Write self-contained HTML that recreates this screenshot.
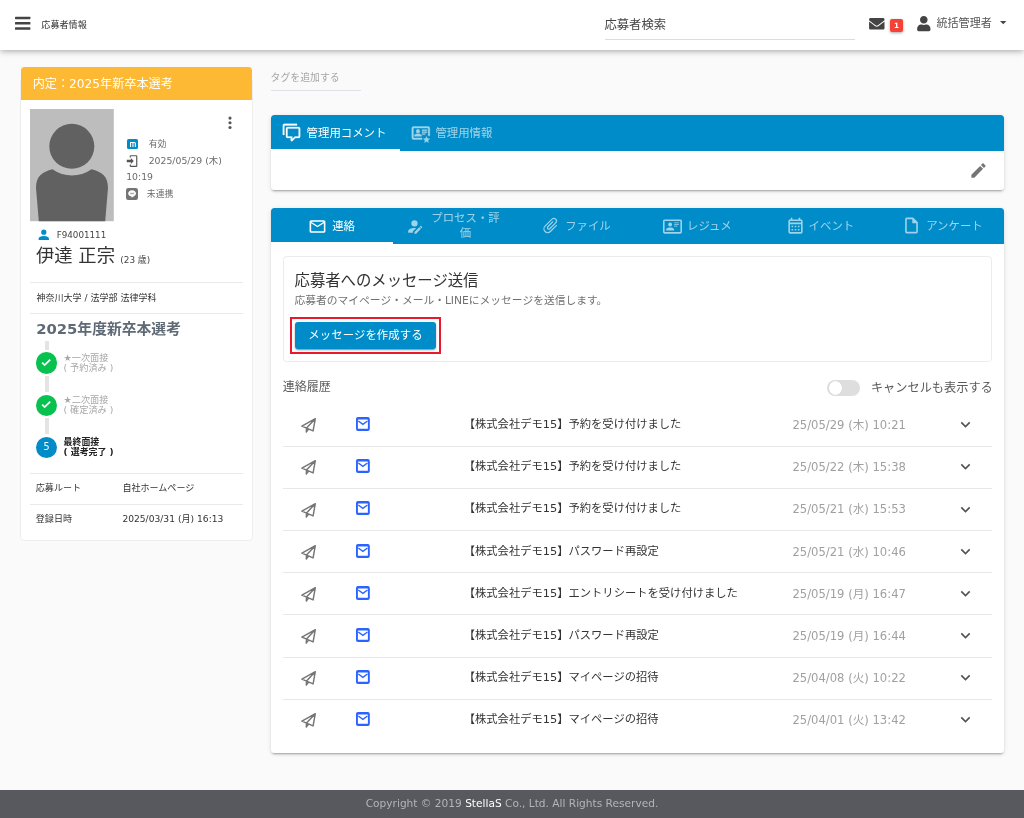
<!DOCTYPE html>
<html lang="ja">
<head>
<meta charset="utf-8">
<title>応募者情報</title>
<style>
*{box-sizing:border-box;margin:0;padding:0}
html,body{width:1024px;height:818px;overflow:hidden}
body{background:#fafafa;color:#333;font-family:"DejaVu Sans","Liberation Sans","Noto Sans CJK JP",sans-serif;font-size:11.4px;position:relative}
#wrap{position:absolute;left:0;top:0;width:1024px;height:818px;will-change:transform}
.abs{position:absolute;white-space:nowrap}
svg{position:absolute;display:block;overflow:visible}
/* header */
#hdr{position:absolute;left:0;top:0;width:1024px;height:49.5px;background:#fff;box-shadow:0 2px 4px -1px rgba(0,0,0,.16),0 4px 5px 0 rgba(0,0,0,.09),0 1px 10px 0 rgba(0,0,0,.07)}
.bar{position:absolute;left:15px;width:15.3px;height:2.3px;background:#444;border-radius:.6px}
/* left card */
#lc{position:absolute;left:20px;top:80px;width:233px;height:461px;background:#fff;border:1px solid #ededed;border-radius:0 0 4px 4px}
#lch{position:absolute;left:21px;top:67px;width:231px;height:33px;background:#fdb933;border-radius:3.5px 3.5px 0 0}
.hr{position:absolute;left:30px;width:213.4px;height:1px;background:#e9e9e9}
.g{color:#6b6b6b}
.step{position:absolute;left:63.5px;font-size:9.2px;line-height:10.3px;color:#a8a8a8;white-space:nowrap}
.circ{position:absolute;left:35.6px;width:21.8px;height:21.8px;border-radius:50%}
.vl{position:absolute;left:45.2px;width:3.6px;background:#e4e4e4}
.lab{position:absolute;font-size:9.05px;line-height:12px;color:#333;white-space:nowrap}
.card{position:absolute;left:270.8px;width:733.4px;background:#fff;border-radius:3.5px;box-shadow:0 3px 1px -2px rgba(0,0,0,.16),0 2px 2px 0 rgba(0,0,0,.11),0 1px 5px 0 rgba(0,0,0,.11)}
.bluebar{position:absolute;left:0;top:0;width:100%;background:#008cc8;border-radius:3.5px 3.5px 0 0}
.tabt{font-size:11.4px;line-height:18px;color:rgba(255,255,255,.62)}
.dim{opacity:.62}
.row{position:absolute;left:283.4px;width:708.8px;height:42.17px}
.row .ln{position:absolute;left:0;bottom:-.5px;width:100%;height:1px;background:#e8e8e8}
/* footer */
#ft{position:absolute;left:0;top:790.3px;width:1024px;height:28px;background:#58595e;color:#b4b4b7;font-size:10.6px;line-height:27.6px;text-align:center;white-space:nowrap}
#ft b{color:#fff;font-weight:normal}
</style>
</head>
<body>
<div id="wrap">

<!-- ================= HEADER ================= -->
<div id="hdr">
  <svg style="left:15px;top:16px" width="15.4" height="14.2" viewBox="0 0 15.4 14.2"><rect x="0" y=".65" width="15.4" height="2.5" rx=".6" fill="#444"/><rect x="0" y="6" width="15.4" height="2.5" rx=".6" fill="#444"/><rect x="0" y="11.35" width="15.4" height="2.5" rx=".6" fill="#444"/></svg>
  <div class="abs" style="left:41.3px;top:17.5px;font-size:9.1px;line-height:14px;color:#333">応募者情報</div>
  <div class="abs" style="left:604.5px;top:16px;font-size:12.3px;line-height:18px;color:#444">応募者検索</div>
  <div style="position:absolute;left:604.8px;top:38.6px;width:250.4px;height:1px;background:#dcdcdc"></div>
  <!-- envelope -->
  <svg style="left:868.8px;top:17.6px" width="15.6" height="11.6" viewBox="0 0 512 384"><path fill="#444" d="M502 126c4-3 10 0 10 5v205c0 26-22 48-48 48H48c-26 0-48-22-48-48V131c0-5 6-8 10-5 22 17 52 39 154 113 21 15 57 48 92 48 36 0 72-33 93-48 102-74 131-96 153-113zM256 256c23 0 57-29 73-41 133-96 143-105 174-129 6-5 9-12 9-19V48c0-26-22-48-48-48H48C22 0 0 22 0 48v19c0 7 3 14 9 19 31 24 41 33 174 129 16 12 50 41 73 41z"/></svg>
  <!-- badge -->
  <div style="position:absolute;left:890.3px;top:19.3px;width:12.6px;height:12.6px;background:#f44336;border-radius:2px;box-shadow:0 1px 3px rgba(0,0,0,.35);color:#fff;font-size:7.2px;font-weight:bold;line-height:13.4px;text-align:center">1</div>
  <!-- user -->
  <svg style="left:916.6px;top:15.8px" width="13.6" height="15.2" viewBox="0 0 448 512"><path fill="#444" d="M224 256c71 0 128-57 128-128S295 0 224 0 96 57 96 128s57 128 128 128zm90 32h-17c-22 10-47 16-73 16s-51-6-73-16h-17C60 288 0 348 0 422v42c0 27 21 48 48 48h352c27 0 48-21 48-48v-42c0-74-60-134-134-134z"/></svg>
  <div class="abs" style="left:936.4px;top:15px;font-size:11.1px;line-height:18px;color:#555">統括管理者</div>
  <svg style="left:999.8px;top:20.8px" width="6.4" height="3.2" viewBox="0 0 10 5"><path fill="#444" d="M0 0h10L5 5z"/></svg>
</div>

<!-- ================= LEFT CARD ================= -->
<div id="lc"></div>
<div id="lch"></div>
<div class="abs" style="left:32.7px;top:74.9px;font-size:12.15px;line-height:19px;color:#fff">内定：2025年新卒本選考</div>

<!-- avatar -->
<svg style="left:30px;top:108.6px" width="83.8" height="112.2" viewBox="0 0 83.8 112.2">
  <rect width="83.8" height="112.2" fill="#bdbdbd"/>
  <circle cx="41.8" cy="37.3" r="22.5" fill="#616161"/>
  <path fill="#616161" d="M8.8,112.2 L6,79 C6,67 12,63 22.5,60.2 C34,68.5 50,68.5 61.5,60.2 C72,63 78,67 78,79 L75.2,112.2 Z"/>
</svg>
<!-- kebab -->
<svg style="left:227.5px;top:115.6px" width="4" height="14" viewBox="0 0 4 14"><circle cx="2" cy="2.1" r="1.55" fill="#555"/><circle cx="2" cy="6.8" r="1.55" fill="#555"/><circle cx="2" cy="11.5" r="1.55" fill="#555"/></svg>

<!-- status lines -->
<div style="position:absolute;left:127.3px;top:138.9px;width:10.6px;height:10.6px;background:#008cc8;border-radius:1.6px"></div>
<svg style="left:129.7px;top:141.9px" width="5.9" height="5" viewBox="0 0 6.4 5.4"><path fill="none" stroke="#fff" stroke-width="1.15" d="M.6,5.4V.6H4.7A1.1,1.1 0 0 1 5.8,1.7V5.4M3.2,.6V5.4"/></svg>
<div class="abs g" style="left:148.7px;top:136px;font-size:8.87px;line-height:16px">有効</div>
<svg style="left:125.4px;top:154px" width="14.1" height="14.1" viewBox="0 0 24 24"><path fill="#555" d="M10,17V14H3V10H10V7L15,12L10,17M10,2H19A2,2 0 0,1 21,4V20A2,2 0 0,1 19,22H10A2,2 0 0,1 8,20V18H10V20H19V4H10V6H8V4A2,2 0 0,1 10,2Z"/></svg>
<div class="abs g" style="left:148.7px;top:153px;font-size:9.3px;line-height:16px">2025/05/29 (木)</div>
<div class="abs g" style="left:126.2px;top:169.4px;font-size:9.3px;line-height:16px">10:19</div>
<div style="position:absolute;left:126px;top:188.1px;width:12px;height:12.1px;background:#757575;border-radius:2.2px"></div>
<svg style="left:127.9px;top:190.4px" width="8.2" height="8" viewBox="0 0 8.2 8"><path fill="#fff" d="M4.1,.3C1.9,.3 .2,1.7 .2,3.4C.2,4.9 1.5,6.1 3.4,6.4C3.7,6.5 3.6,6.8 3.5,7.4C3.5,7.6 3.7,7.7 4,7.5C4.4,7.300 6.700,6 7.500,4.800C7.900,4.300 8,3.900 8,3.400C8,1.700 6.300,.3 4.100,.3Z"/><rect x="2" y="2.7" width="4.2" height="1.5" rx=".4" fill="#757575" opacity=".55"/></svg>
<div class="abs g" style="left:146.8px;top:186.4px;font-size:8.87px;line-height:16px">未連携</div>

<!-- id + name -->
<svg style="left:35.8px;top:226.9px" width="15.6" height="15.6" viewBox="0 0 24 24"><path fill="#008cc8" d="M12,4A4,4 0 0,1 16,8A4,4 0 0,1 12,12A4,4 0 0,1 8,8A4,4 0 0,1 12,4M12,14C16.42,14 20,15.790 20,18V20H4V18C4,15.790 7.580,14 12,14Z"/></svg>
<div class="abs" style="left:56.7px;top:226.5px;font-size:8.75px;line-height:16px;color:#444">F94001111</div>
<div class="abs" style="left:36px;top:243px;font-size:18.3px;line-height:26px;color:#333">伊達 正宗</div>
<div class="abs" style="left:120.3px;top:252px;font-size:8.87px;line-height:16px;color:#444">(23 歳)</div>

<div class="hr" style="top:281.8px"></div>
<div class="lab" style="left:36.4px;top:292px">神奈川大学 / 法学部 法律学科</div>
<div class="hr" style="top:313px"></div>
<div class="abs" style="left:36.2px;top:316.5px;font-size:14.8px;line-height:24px;font-weight:bold;color:#5f6a76">2025年度新卒本選考</div>

<!-- timeline -->
<div class="vl" style="top:341px;height:9px"></div>
<div class="vl" style="top:376.3px;height:15.4px"></div>
<div class="vl" style="top:418.4px;height:15.4px"></div>
<div class="circ" style="top:352.4px;background:#07c24e"></div>
<div class="circ" style="top:394.5px;background:#07c24e"></div>
<div class="circ" style="top:436.6px;background:#008cc8"></div>
<svg style="left:40.3px;top:355.9px" width="12.4" height="12.4" viewBox="0 0 24 24"><path fill="none" stroke="#fff" stroke-width="3.4" d="M4.2,12.8L9,17.6L19.8,6.8"/></svg>
<svg style="left:40.3px;top:398px" width="12.4" height="12.4" viewBox="0 0 24 24"><path fill="none" stroke="#fff" stroke-width="3.4" d="M4.2,12.8L9,17.6L19.8,6.8"/></svg>
<div class="abs" style="left:35.6px;top:439px;width:21.8px;text-align:center;font-size:9.6px;line-height:16px;color:#fff">5</div>
<div class="step" style="top:352.6px">★一次面接<br>( 予約済み )</div>
<div class="step" style="top:394.7px">★二次面接<br>( 確定済み )</div>
<div class="step" style="top:436.9px;color:#222;font-weight:bold;font-size:8.95px">最終面接<br>( 選考完了 )</div>

<div class="hr" style="top:472.9px"></div>
<div class="lab" style="left:35.8px;top:481.8px">応募ルート</div>
<div class="lab" style="left:122.4px;top:481.8px">自社ホームページ</div>
<div class="hr" style="top:503.9px"></div>
<div class="lab" style="left:35.8px;top:512.8px">登録日時</div>
<div class="lab" style="left:122.4px;top:512.8px;font-size:9.15px">2025/03/31 (月) 16:13</div>

<!-- ================= TAG INPUT ================= -->
<div class="abs" style="left:270.5px;top:69.6px;font-size:9.9px;line-height:16px;color:#a6a6a6">タグを追加する</div>
<div style="position:absolute;left:271px;top:90px;width:90px;height:1px;background:#dfe1ea"></div>

<!-- ================= COMMENT CARD ================= -->
<div class="card" style="top:114.6px;height:75.5px">
  <div class="bluebar" style="height:36.2px"></div>
  <div style="position:absolute;left:0;top:34.3px;width:128.8px;height:1.9px;background:#fff"></div>
</div>
<svg style="left:282.4px;top:123.4px" width="19" height="19" viewBox="0 0 24 24"><path fill="#fff" stroke="#fff" stroke-width=".3" d="M12,23A1,1 0 0,1 11,22V19H7A2,2 0 0,1 5,17V7A2,2 0 0,1 7,5H21A2,2 0 0,1 23,7V17A2,2 0 0,1 21,19H16.9L13.2,22.710C13,22.890 12.760,23 12.500,23H12M13,17V20.080L16.080,17H21V7H7V17H13M3,15H1V3A2,2 0 0,1 3,1H19V3H3V15Z"/></svg>
<div class="abs" style="left:306.6px;top:124px;font-size:11.4px;line-height:18px;color:#fff">管理用コメント</div>
<svg style="left:410.6px;top:123.6px" width="19.6" height="19.6" viewBox="0 0 24 24" opacity=".62"><path fill="#fff" stroke="#fff" stroke-width=".45" d="M3,3H21A2,2 0 0,1 23,5V14.500H21V5H3V17H13.500V19H3A2,2 0 0,1 1,17V5A2,2 0 0,1 3,3M13,14.200V15H4V14.200C4,12.700 7,12 8.500,12C10,12 13,12.700 13,14.200M8.500,6.500A2.250,2.250 0 0,1 10.750,8.750A2.250,2.250 0 0,1 8.500,11A2.250,2.250 0 0,1 6.250,8.750A2.250,2.250 0 0,1 8.500,6.500M13.500,7H19.500V8.200H13.500V7M13.500,9.400H19.500V10.600H13.500V9.400M13.500,11.800H17.500V13H13.500V11.800M19,15.300L20.120,17.900L22.900,18.150L20.780,19.990L21.420,22.700L19,21.260L16.580,22.700L17.220,19.990L15.100,18.150L17.880,17.900L19,15.300Z"/></svg>
<div class="abs" style="left:435.4px;top:124px;font-size:11.4px;line-height:18px;color:rgba(255,255,255,.62)">管理用情報</div>
<svg style="left:968.7px;top:160.9px" width="19" height="19" viewBox="0 0 24 24"><path fill="#757575" d="M20.710,7.040C21.100,6.650 21.100,6 20.710,5.630L18.370,3.290C18,2.900 17.350,2.900 16.960,3.290L15.120,5.120L18.870,8.870M3,17.250V21H6.750L17.810,9.930L14.060,6.180L3,17.250Z"/></svg>

<!-- ================= MAIN CARD ================= -->
<div class="card" style="top:208.1px;height:544.6px">
  <div class="bluebar" style="height:36px"></div>
  <div style="position:absolute;left:0;top:34.2px;width:122px;height:1.8px;background:#fff"></div>
  <div style="position:absolute;left:12.6px;top:48.2px;width:708.8px;height:105.4px;border:1px solid #ececec;border-radius:3.5px"></div>
</div>

<!-- tabs -->
<svg style="left:308.1px;top:216.7px" width="19" height="19" viewBox="0 0 24 24"><path fill="#fff" d="M22,6C22,4.900 21.100,4 20,4H4C2.900,4 2,4.900 2,6V18C2,19.100 2.900,20 4,20H20C21.100,20 22,19.100 22,18V6M20,6L12,11L4,6H20M20,18H4V8L12,13L20,8V18Z"/></svg>
<div class="abs" style="left:332.2px;top:217px;font-size:11.4px;line-height:18px;color:#fff">連絡</div>

<svg class="dim" style="left:404.8px;top:217.1px" width="19" height="19" viewBox="0 0 24 24"><path fill="#fff" d="M21.700,13.350L20.700,14.350L18.650,12.300L19.650,11.300C19.860,11.090 20.210,11.090 20.420,11.300L21.700,12.580C21.910,12.790 21.910,13.140 21.700,13.350M12,18.940L18.060,12.880L20.110,14.930L14.060,21H12V18.940M12,14C7.580,14 4,15.790 4,18V20H10V18.110L14,14.110C13.340,14.030 12.670,14 12,14M12,4A4,4 0 0,0 8,8A4,4 0 0,0 12,12A4,4 0 0,0 16,8A4,4 0 0,0 12,4Z"/></svg>
<div class="abs tabt" style="left:431.3px;top:210.5px;width:68.4px;line-height:15.3px;text-align:center;white-space:normal">プロセス・評<br>価</div>

<svg class="dim" style="left:541.2px;top:216.4px" width="19" height="19" viewBox="0 0 24 24"><g transform="rotate(45 12 12)"><path fill="#fff" d="M16.500,6V17.500A4,4 0 0,1 12.500,21.500A4,4 0 0,1 8.500,17.500V5A2.500,2.500 0 0,1 11,2.500A2.500,2.500 0 0,1 13.500,5V15.500A1,1 0 0,1 12.500,16.500A1,1 0 0,1 11.500,15.500V6H10V15.500A2.500,2.500 0 0,0 12.500,18A2.500,2.500 0 0,0 15,15.500V5A4,4 0 0,0 11,1A4,4 0 0,0 7,5V17.500A5.500,5.500 0 0,0 12.500,23A5.500,5.500 0 0,0 18,17.500V6H16.500Z"/></g></svg>
<div class="abs tabt" style="left:565.2px;top:217px">ファイル</div>

<svg class="dim" style="left:663.3px;top:216.5px" width="19" height="19" viewBox="0 0 24 24"><path fill="#fff" d="M22,3H2C.910,3.040 .040,3.910 0,5V19C.040,20.090 .910,20.960 2,21H22C23.090,20.960 23.960,20.090 24,19V5C23.960,3.910 23.090,3.040 22,3M22,19H2V5H22V19M14,17V15.750C14,14.090 10.660,13.250 9,13.250C7.340,13.250 4,14.090 4,15.750V17H14M9,7A2.500,2.500 0 0,0 6.500,9.500A2.500,2.500 0 0,0 9,12A2.500,2.500 0 0,0 11.500,9.500A2.500,2.500 0 0,0 9,7M14,7V8H20V7H14M14,9V10H20V9H14M14,11V12H18V11H14"/></svg>
<div class="abs tabt" style="left:687px;top:217px">レジュメ</div>

<svg class="dim" style="left:785.7px;top:216.5px" width="19" height="19" viewBox="0 0 24 24"><path fill="#fff" d="M7,11H9V13H7V11M21,5V19C21,20.110 20.110,21 19,21H5C3.890,21 3,20.100 3,19V5C3,3.900 3.900,3 5,3H6V1H8V3H16V1H18V3H19C20.110,3 21,3.900 21,5M5,7H19V5H5V7M19,19V9H5V19H19M15,13V11H17V13H15M11,13V11H13V13H11M7,15H9V17H7V15M15,17V15H17V17H15M11,17V15H13V17H11Z"/></svg>
<div class="abs tabt" style="left:808.6px;top:217px">イベント</div>

<svg class="dim" style="left:901.8px;top:216.4px" width="19" height="19" viewBox="0 0 24 24"><path fill="#fff" d="M14,2H6A2,2 0 0,0 4,4V20A2,2 0 0,0 6,22H18A2,2 0 0,0 20,20V8L14,2M18,20H6V4H13V9H18V20Z"/></svg>
<div class="abs tabt" style="left:926.2px;top:217px">アンケート</div>

<!-- message box -->
<div class="abs" style="left:294.6px;top:268.6px;font-size:15.35px;line-height:24px;color:#333">応募者へのメッセージ送信</div>
<div class="abs" style="left:294.6px;top:292.6px;font-size:10.75px;line-height:16px;color:#707070">応募者のマイページ・メール・LINEにメッセージを送信します。</div>
<div style="position:absolute;left:289.8px;top:317.3px;width:150.8px;height:36.3px;border:2px solid #e8192c"></div>
<div style="position:absolute;left:295px;top:321.8px;width:141px;height:27.2px;background:#008cc8;border-radius:3px;box-shadow:0 2px 1px -1px rgba(0,0,0,.2),0 1px 2px 0 rgba(0,0,0,.2),0 1px 3px 0 rgba(0,0,0,.15);color:#fff;font-size:11.4px;line-height:26.6px;text-align:center;letter-spacing:.1px;white-space:nowrap">メッセージを作成する</div>

<!-- history heading + toggle -->
<div class="abs" style="left:282.8px;top:378.2px;font-size:12px;line-height:18px;color:#5e5e5e">連絡履歴</div>
<div style="position:absolute;left:827px;top:379.6px;width:32.8px;height:16.7px;border-radius:8.4px;background:#dedede"></div>
<div style="position:absolute;left:829px;top:381.4px;width:13.2px;height:13.2px;border-radius:50%;background:#fff;box-shadow:0 0 1px rgba(0,0,0,.15)"></div>
<div class="abs" style="left:870.9px;top:379.1px;font-size:12.2px;line-height:18px;color:#5a5a5a">キャンセルも表示する</div>

<!-- rows -->
<div class="row" style="top:404.10px"><i class="ln"></i><svg style="left:17.6px;top:13.2px" width="16" height="16" viewBox="0 0 16 16"><path fill="none" stroke="#757575" stroke-width="1.45" stroke-linejoin="round" stroke-linecap="round" d="M14.300,1.700 L.9,9.100 L12.100,13.900 Z M14.300,1.700 L5.500,10.900 L5.300,15.100 L7.600,12.100"/></svg><svg style="left:73.1px;top:12.9px" width="13.8" height="14" viewBox="0 0 13.8 14"><rect width="13.8" height="14" rx="2" fill="#2b63ff"/><rect x="1.9" y="2.500" width="10" height="9.300" rx=".4" fill="#fff"/><path fill="none" stroke="#2b63ff" stroke-width="1.35" d="M2.300,4 L6.900,7.400 L11.500,4"/></svg><div class="abs" style="left:180.3px;top:11.9px;font-size:11.3px;line-height:18px;color:#333">【株式会社デモ15】予約を受け付けました</div><div class="abs" style="left:509px;top:11.9px;font-size:11.6px;line-height:18px;color:#a0a0a0">25/05/29 (木) 10:21</div><svg style="left:672.2px;top:11.1px" width="19" height="19" viewBox="0 0 24 24"><path fill="#505050" d="M7.410,8.580L12,13.170L16.590,8.580L18,10L12,16L6,10L7.410,8.580Z"/></svg></div>
<div class="row" style="top:446.27px"><i class="ln"></i><svg style="left:17.6px;top:13.2px" width="16" height="16" viewBox="0 0 16 16"><path fill="none" stroke="#757575" stroke-width="1.45" stroke-linejoin="round" stroke-linecap="round" d="M14.300,1.700 L.9,9.100 L12.100,13.900 Z M14.300,1.700 L5.500,10.900 L5.300,15.100 L7.600,12.100"/></svg><svg style="left:73.1px;top:12.9px" width="13.8" height="14" viewBox="0 0 13.8 14"><rect width="13.8" height="14" rx="2" fill="#2b63ff"/><rect x="1.9" y="2.500" width="10" height="9.300" rx=".4" fill="#fff"/><path fill="none" stroke="#2b63ff" stroke-width="1.35" d="M2.300,4 L6.900,7.400 L11.500,4"/></svg><div class="abs" style="left:180.3px;top:11.9px;font-size:11.3px;line-height:18px;color:#333">【株式会社デモ15】予約を受け付けました</div><div class="abs" style="left:509px;top:11.9px;font-size:11.6px;line-height:18px;color:#a0a0a0">25/05/22 (木) 15:38</div><svg style="left:672.2px;top:11.1px" width="19" height="19" viewBox="0 0 24 24"><path fill="#505050" d="M7.410,8.580L12,13.170L16.590,8.580L18,10L12,16L6,10L7.410,8.580Z"/></svg></div>
<div class="row" style="top:488.44px"><i class="ln"></i><svg style="left:17.6px;top:13.2px" width="16" height="16" viewBox="0 0 16 16"><path fill="none" stroke="#757575" stroke-width="1.45" stroke-linejoin="round" stroke-linecap="round" d="M14.300,1.700 L.9,9.100 L12.100,13.900 Z M14.300,1.700 L5.500,10.900 L5.300,15.100 L7.600,12.100"/></svg><svg style="left:73.1px;top:12.9px" width="13.8" height="14" viewBox="0 0 13.8 14"><rect width="13.8" height="14" rx="2" fill="#2b63ff"/><rect x="1.9" y="2.500" width="10" height="9.300" rx=".4" fill="#fff"/><path fill="none" stroke="#2b63ff" stroke-width="1.35" d="M2.300,4 L6.900,7.400 L11.500,4"/></svg><div class="abs" style="left:180.3px;top:11.9px;font-size:11.3px;line-height:18px;color:#333">【株式会社デモ15】予約を受け付けました</div><div class="abs" style="left:509px;top:11.9px;font-size:11.6px;line-height:18px;color:#a0a0a0">25/05/21 (水) 15:53</div><svg style="left:672.2px;top:11.1px" width="19" height="19" viewBox="0 0 24 24"><path fill="#505050" d="M7.410,8.580L12,13.170L16.590,8.580L18,10L12,16L6,10L7.410,8.580Z"/></svg></div>
<div class="row" style="top:530.61px"><i class="ln"></i><svg style="left:17.6px;top:13.2px" width="16" height="16" viewBox="0 0 16 16"><path fill="none" stroke="#757575" stroke-width="1.45" stroke-linejoin="round" stroke-linecap="round" d="M14.300,1.700 L.9,9.100 L12.100,13.900 Z M14.300,1.700 L5.500,10.900 L5.300,15.100 L7.600,12.100"/></svg><svg style="left:73.1px;top:12.9px" width="13.8" height="14" viewBox="0 0 13.8 14"><rect width="13.8" height="14" rx="2" fill="#2b63ff"/><rect x="1.9" y="2.500" width="10" height="9.300" rx=".4" fill="#fff"/><path fill="none" stroke="#2b63ff" stroke-width="1.35" d="M2.300,4 L6.900,7.400 L11.500,4"/></svg><div class="abs" style="left:180.3px;top:11.9px;font-size:11.3px;line-height:18px;color:#333">【株式会社デモ15】パスワード再設定</div><div class="abs" style="left:509px;top:11.9px;font-size:11.6px;line-height:18px;color:#a0a0a0">25/05/21 (水) 10:46</div><svg style="left:672.2px;top:11.1px" width="19" height="19" viewBox="0 0 24 24"><path fill="#505050" d="M7.410,8.580L12,13.170L16.590,8.580L18,10L12,16L6,10L7.410,8.580Z"/></svg></div>
<div class="row" style="top:572.78px"><i class="ln"></i><svg style="left:17.6px;top:13.2px" width="16" height="16" viewBox="0 0 16 16"><path fill="none" stroke="#757575" stroke-width="1.45" stroke-linejoin="round" stroke-linecap="round" d="M14.300,1.700 L.9,9.100 L12.100,13.900 Z M14.300,1.700 L5.500,10.900 L5.300,15.100 L7.600,12.100"/></svg><svg style="left:73.1px;top:12.9px" width="13.8" height="14" viewBox="0 0 13.8 14"><rect width="13.8" height="14" rx="2" fill="#2b63ff"/><rect x="1.9" y="2.500" width="10" height="9.300" rx=".4" fill="#fff"/><path fill="none" stroke="#2b63ff" stroke-width="1.35" d="M2.300,4 L6.900,7.400 L11.500,4"/></svg><div class="abs" style="left:180.3px;top:11.9px;font-size:11.3px;line-height:18px;color:#333">【株式会社デモ15】エントリシートを受け付けました</div><div class="abs" style="left:509px;top:11.9px;font-size:11.6px;line-height:18px;color:#a0a0a0">25/05/19 (月) 16:47</div><svg style="left:672.2px;top:11.1px" width="19" height="19" viewBox="0 0 24 24"><path fill="#505050" d="M7.410,8.580L12,13.170L16.590,8.580L18,10L12,16L6,10L7.410,8.580Z"/></svg></div>
<div class="row" style="top:614.95px"><i class="ln"></i><svg style="left:17.6px;top:13.2px" width="16" height="16" viewBox="0 0 16 16"><path fill="none" stroke="#757575" stroke-width="1.45" stroke-linejoin="round" stroke-linecap="round" d="M14.300,1.700 L.9,9.100 L12.100,13.900 Z M14.300,1.700 L5.500,10.900 L5.300,15.100 L7.600,12.100"/></svg><svg style="left:73.1px;top:12.9px" width="13.8" height="14" viewBox="0 0 13.8 14"><rect width="13.8" height="14" rx="2" fill="#2b63ff"/><rect x="1.9" y="2.500" width="10" height="9.300" rx=".4" fill="#fff"/><path fill="none" stroke="#2b63ff" stroke-width="1.35" d="M2.300,4 L6.900,7.400 L11.500,4"/></svg><div class="abs" style="left:180.3px;top:11.9px;font-size:11.3px;line-height:18px;color:#333">【株式会社デモ15】パスワード再設定</div><div class="abs" style="left:509px;top:11.9px;font-size:11.6px;line-height:18px;color:#a0a0a0">25/05/19 (月) 16:44</div><svg style="left:672.2px;top:11.1px" width="19" height="19" viewBox="0 0 24 24"><path fill="#505050" d="M7.410,8.580L12,13.170L16.590,8.580L18,10L12,16L6,10L7.410,8.580Z"/></svg></div>
<div class="row" style="top:657.12px"><i class="ln"></i><svg style="left:17.6px;top:13.2px" width="16" height="16" viewBox="0 0 16 16"><path fill="none" stroke="#757575" stroke-width="1.45" stroke-linejoin="round" stroke-linecap="round" d="M14.300,1.700 L.9,9.100 L12.100,13.900 Z M14.300,1.700 L5.500,10.900 L5.300,15.100 L7.600,12.100"/></svg><svg style="left:73.1px;top:12.9px" width="13.8" height="14" viewBox="0 0 13.8 14"><rect width="13.8" height="14" rx="2" fill="#2b63ff"/><rect x="1.9" y="2.500" width="10" height="9.300" rx=".4" fill="#fff"/><path fill="none" stroke="#2b63ff" stroke-width="1.35" d="M2.300,4 L6.900,7.400 L11.500,4"/></svg><div class="abs" style="left:180.3px;top:11.9px;font-size:11.3px;line-height:18px;color:#333">【株式会社デモ15】マイページの招待</div><div class="abs" style="left:509px;top:11.9px;font-size:11.6px;line-height:18px;color:#a0a0a0">25/04/08 (火) 10:22</div><svg style="left:672.2px;top:11.1px" width="19" height="19" viewBox="0 0 24 24"><path fill="#505050" d="M7.410,8.580L12,13.170L16.590,8.580L18,10L12,16L6,10L7.410,8.580Z"/></svg></div>
<div class="row" style="top:699.29px"><svg style="left:17.6px;top:13.2px" width="16" height="16" viewBox="0 0 16 16"><path fill="none" stroke="#757575" stroke-width="1.45" stroke-linejoin="round" stroke-linecap="round" d="M14.300,1.700 L.9,9.100 L12.100,13.900 Z M14.300,1.700 L5.500,10.900 L5.300,15.100 L7.600,12.100"/></svg><svg style="left:73.1px;top:12.9px" width="13.8" height="14" viewBox="0 0 13.8 14"><rect width="13.8" height="14" rx="2" fill="#2b63ff"/><rect x="1.9" y="2.500" width="10" height="9.300" rx=".4" fill="#fff"/><path fill="none" stroke="#2b63ff" stroke-width="1.35" d="M2.300,4 L6.900,7.400 L11.500,4"/></svg><div class="abs" style="left:180.3px;top:11.9px;font-size:11.3px;line-height:18px;color:#333">【株式会社デモ15】マイページの招待</div><div class="abs" style="left:509px;top:11.9px;font-size:11.6px;line-height:18px;color:#a0a0a0">25/04/01 (火) 13:42</div><svg style="left:672.2px;top:11.1px" width="19" height="19" viewBox="0 0 24 24"><path fill="#505050" d="M7.410,8.580L12,13.170L16.590,8.580L18,10L12,16L6,10L7.410,8.580Z"/></svg></div>


<!-- ================= FOOTER ================= -->
<div id="ft">Copyright © 2019 <b>StellaS</b> Co., Ltd. All Rights Reserved.</div>

</div>
</body>
</html>
